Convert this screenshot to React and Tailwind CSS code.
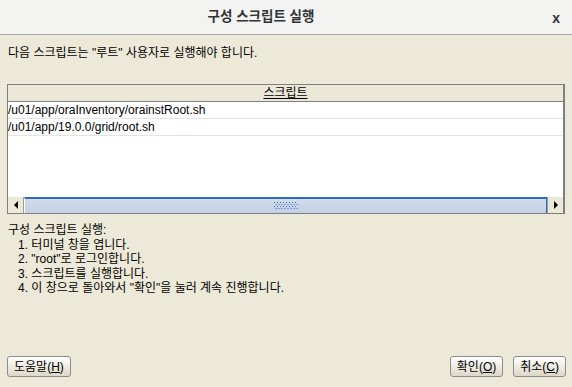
import React from 'react';

const font = { fontFamily: '"Liberation Sans", "Noto Sans CJK KR", sans-serif' };

const Btn = ({ label, mnemonic, className = '' }) => (
  <button
    className={`h-[21px] px-[6px] rounded-[3px] border border-[#8c8c8c] bg-gradient-to-b from-white to-[#dcd8c6] text-[12px] text-black leading-none ${className}`}
  >
    {label}(<span className="underline">{mnemonic}</span>)
  </button>
);

const steps = [
  '터미널 창을 엽니다.',
  '"root"로 로그인합니다.',
  '스크립트를 실행합니다.',
  '이 창으로 돌아와서 "확인"을 눌러 계속 진행합니다.',
];

export default function App() {
  return (
    <div className="w-[572px] h-[387px] flex flex-col bg-[#ece9d8] text-black" style={font}>
      {/* Title bar */}
      <div className="h-[35px] shrink-0 flex items-center bg-[#f3f3f2] border-b border-[#a8a8a6] relative">
        <div className="flex-1 text-center pr-[50px] text-[13.5px] font-bold text-[#2e3436]">구성 스크립트 실행</div>
        <span className="absolute right-[12px] top-[8px] text-[14px] font-bold text-[#2e3436]">x</span>
      </div>

      <div className="flex-1 flex flex-col px-[7px]">
        <div className="mt-[10px] pl-[1px] text-[12px] leading-[16px]">다음 스크립트는 "루트" 사용자로 실행해야 합니다.</div>

        {/* Table */}
        <div className="mt-[23px] h-[130px] flex flex-col border border-[#7f7f7f] border-r-2">
          <div className="h-[17px] shrink-0 flex items-center justify-center bg-[#ebe8d8] border-b border-[#7f7f7f] text-[12px]">
            <span className="underline">스크립트</span>
          </div>
          <div className="flex-1 bg-white flex flex-col">
            <div className="h-[17px] flex items-center border-b border-[#e3e3e3] text-[12px]">/u01/app/oraInventory/orainstRoot.sh</div>
            <div className="h-[17px] flex items-center border-b border-[#e3e3e3] text-[12px]">/u01/app/19.0.0/grid/root.sh</div>
          </div>
          {/* Horizontal scrollbar */}
          <div className="h-[16px] shrink-0 flex bg-[#ece9d8]">
            <div className="w-[16px] flex items-center justify-center border-r border-[#9a9a9a] bg-[#ece9d8]">
              <svg width="6" height="8" viewBox="0 0 6 8"><path d="M5 0 L1 4 L5 8 Z" fill="#000" /></svg>
            </div>
            <div className="flex-1 flex items-center justify-center bg-gradient-to-b from-[#d2dcea] to-[#c3d0e4] border-t-2 border-[#316ac5] border-l border-l-white border-r border-r-[#316ac5]">
              <svg width="24" height="8" viewBox="0 0 24 8">
                {[0, 1, 2, 3].map(r =>
                  [0, 1, 2, 3, 4, 5, 6, 7].map(c => (
                    <rect key={`${r}-${c}`} x={c * 3 + (r % 2) * 1.5} y={r * 2} width="1" height="1" fill="#316ac5" />
                  ))
                )}
              </svg>
            </div>
            <div className="w-[16px] flex items-center justify-center border-l border-[#9a9a9a] bg-[#ece9d8]">
              <svg width="6" height="8" viewBox="0 0 6 8"><path d="M1 0 L5 4 L1 8 Z" fill="#000" /></svg>
            </div>
          </div>
        </div>

        {/* Instructions */}
        <div className="mt-[9px] pl-[1px] text-[12px] leading-[14.5px]">
          <div>구성 스크립트 실행:</div>
          {steps.map((s, i) => (
            <div key={i} className="pl-[10px]">{i + 1}. {s}</div>
          ))}
        </div>

        <div className="flex-1" />

        {/* Buttons */}
        <div className="flex items-center mb-[10px]">
          <Btn label="도움말" mnemonic="H" />
          <div className="flex-1" />
          <Btn label="확인" mnemonic="O" className="mr-[10px]" />
          <Btn label="취소" mnemonic="C" className="mr-[-1px]" />
        </div>
      </div>
    </div>
  );
}
